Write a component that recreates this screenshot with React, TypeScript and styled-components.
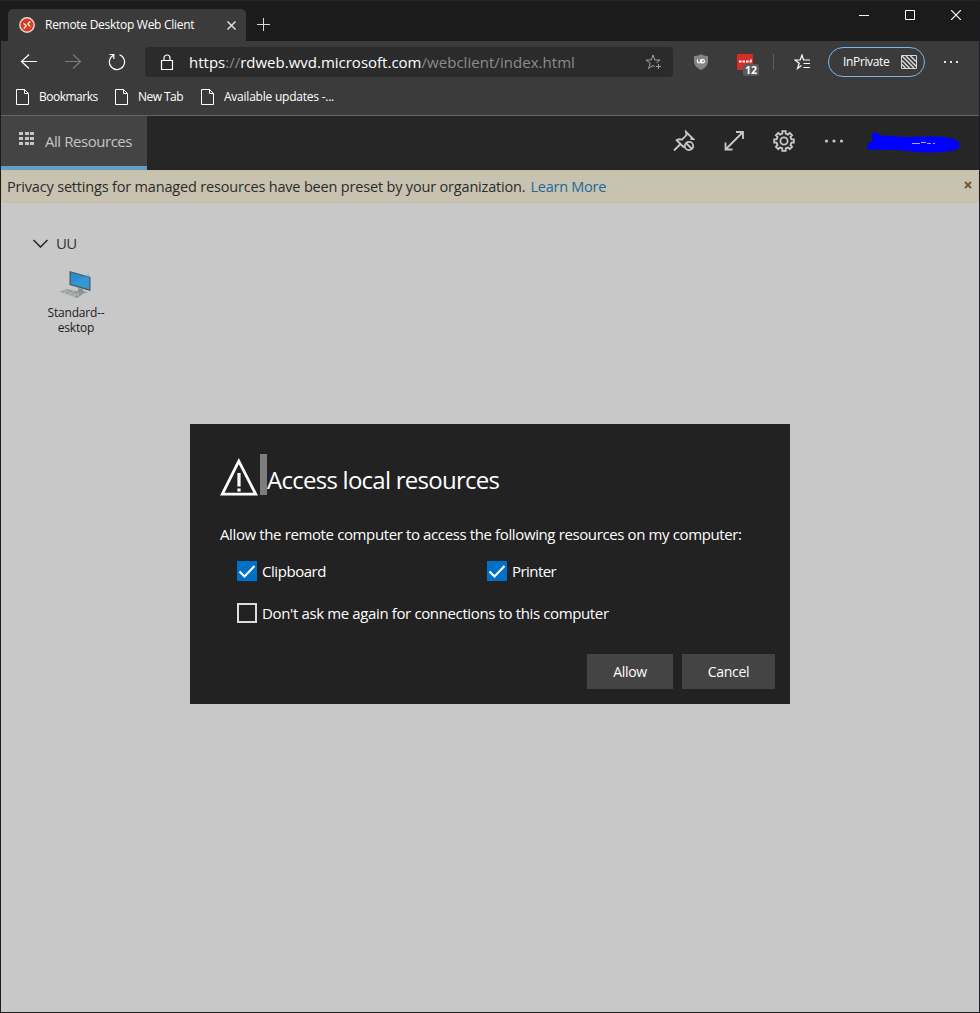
import React from "react";
import styled, { createGlobalStyle } from "styled-components";

const Global = createGlobalStyle`
  * { box-sizing: border-box; }
  body { margin: 0; background: #1b1b1b; font-family: "Open Sans", "Noto Sans", sans-serif; }
  svg { display: block; flex: none; }
`;

const Text = styled.span<{ $size: number; $track?: number; $color?: string }>`
  font-size: ${(p) => p.$size}px;
  letter-spacing: ${(p) => p.$track ?? 0}px;
  color: ${(p) => p.$color ?? "#fff"};
  white-space: nowrap;
  line-height: 20px;
`;

const Window = styled.div`
  width: 980px;
  height: 1013px;
  display: flex;
  flex-direction: column;
  border: 1px solid #1c1b1d;
  border-top-color: #262626;
  background: #c8c8c8;
  overflow: hidden;
`;

const TitleBar = styled.header`
  height: 40px;
  flex: none;
  display: flex;
  align-items: flex-end;
  background: #1b1b1b;
  padding-left: 7px;
`;

const Tab = styled.div`
  width: 238px;
  height: 32px;
  display: flex;
  align-items: center;
  padding: 0 10px 0 11px;
  background: #3b3b3b;
  border-radius: 5px 5px 0 0;
`;

const TabTitle = styled.div`
  flex: 1;
  display: flex;
  margin-left: 10px;
`;

const NewTab = styled.div`
  padding: 0 0 10px 11px;
`;

const WindowButtons = styled.div`
  display: flex;
  gap: 36px;
  margin-left: auto;
  padding: 0 18px 21px 0;
`;

const Toolbar = styled.div`
  height: 42px;
  flex: none;
  display: flex;
  align-items: center;
  background: #3b3b3b;
`;

const NavButtons = styled.div`
  width: 144px;
  display: flex;
  align-items: center;
  gap: 26px;
  padding-left: 19px;
`;

const AddressBar = styled.div`
  width: 528px;
  height: 30px;
  display: flex;
  align-items: center;
  padding: 0 10px 0 15px;
  background: #2b2b2b;
  border-radius: 4px;
`;

const Url = styled.div`
  flex: 1;
  display: flex;
  margin-left: 15px;
`;

const Extensions = styled.div`
  flex: 1;
  display: flex;
  align-items: center;
  padding-left: 20px;
`;

const BlockerIcon = styled.div`
  position: relative;
  margin-left: 28px;
`;

const Badge = styled.span`
  position: absolute;
  left: 6px;
  top: 10px;
  width: 16px;
  height: 12px;
  border-radius: 2px;
  background: #5a5a5a;
  color: #fff;
  font-size: 10.5px;
  font-weight: 700;
  line-height: 12px;
  text-align: center;
`;

const Divider = styled.div`
  width: 1px;
  height: 16px;
  margin: 0 20px 0 20px;
  background: #5c5c5c;
`;

const PrivatePill = styled.div`
  width: 97px;
  height: 30px;
  display: flex;
  align-items: center;
  justify-content: space-between;
  margin-left: 16px;
  padding: 0 7px 0 14px;
  border: 1px solid #77b5ea;
  border-radius: 15px;
`;

const MenuDots = styled.div`
  margin-left: 19px;
`;

const Bookmarks = styled.nav`
  height: 33px;
  flex: none;
  display: flex;
  align-items: center;
  padding: 0 0 4px 15px;
  background: #3b3b3b;
  border-bottom: 1px solid #666;
`;

const Bookmark = styled.div<{ $width: number }>`
  width: ${(p) => p.$width}px;
  display: flex;
  align-items: center;
  gap: 9px;
`;

const AppHeader = styled.div`
  height: 54px;
  flex: none;
  display: flex;
  align-items: center;
  background: #262626;
`;

const ResourcesTab = styled.div`
  width: 146px;
  height: 54px;
  display: flex;
  align-items: center;
  gap: 11px;
  padding-left: 18px;
  background: #444;
  border-bottom: 4px solid #5e9fcb;
`;

const GridIcon = styled.div`
  display: grid;
  grid-template-columns: repeat(3, 4px);
  grid-auto-rows: 3px;
  gap: 2px 1.5px;
  margin-bottom: 5px;
`;

const GridCell = styled.i`
  background: #c6c6c6;
`;

const HeaderActions = styled.div`
  display: flex;
  align-items: center;
  gap: 28px;
  margin-left: auto;
  padding: 0 17px 4px 0;
`;

const UserScribble = styled.div`
  margin: 4px 0 0 -7px;
`;

const Notice = styled.div`
  height: 33px;
  flex: none;
  display: flex;
  align-items: center;
  gap: 5px;
  padding: 0 6px 0 5px;
  background: #c8c3b0;
  border: 1px solid #c8bc9d;
  border-radius: 4px;
`;

const NoticeClose = styled.div`
  margin: -4px 0 0 auto;
`;

const Workspace = styled.main`
  position: relative;
  flex: 1;
  padding: 30px 0 0 30px;
`;

const GroupTitle = styled.div`
  display: flex;
  align-items: center;
  gap: 8px;
  height: 20px;
  padding-left: 2px;
`;

const Resource = styled.div`
  width: 90px;
  display: flex;
  flex-direction: column;
  align-items: center;
  margin-top: 17px;
`;

const ResourceName = styled.div`
  margin-top: 5px;
  text-align: center;
  color: #1c1c1c;
  font-size: 12px;
  line-height: 15px;
  letter-spacing: -0.2px;
`;

const Dialog = styled.section`
  position: absolute;
  left: 189px;
  top: 221px;
  width: 600px;
  height: 280px;
  padding: 30px 15px 15px 30px;
  display: flex;
  flex-direction: column;
  background: #222;
`;

const DialogHeading = styled.div`
  display: flex;
  height: 41px;
`;

const WarningIcon = styled.div`
  padding: 2px 2px 0 0;
`;

const HeadingBar = styled.div`
  width: 7px;
  height: 41px;
  background: #7d7d7d;
`;

const HeadingText = styled.div`
  display: flex;
  padding-top: 16px;
`;

const DialogMessage = styled.div`
  display: flex;
  margin-top: 29px;
`;

const Options = styled.div`
  display: grid;
  grid-template-columns: 250px 1fr;
  row-gap: 22px;
  margin: 17px 0 0 17px;
`;

const Option = styled.label<{ $wide?: boolean }>`
  display: flex;
  align-items: center;
  gap: 5px;
  height: 20px;
  grid-column: ${(p) => (p.$wide ? "1 / -1" : "auto")};
`;

const CheckBox = styled.span<{ $checked?: boolean }>`
  width: 20px;
  height: 20px;
  flex: none;
  background: ${(p) => (p.$checked ? "#0071c8" : "transparent")};
  border: ${(p) => (p.$checked ? "none" : "2px solid #dcdcdc")};
`;

const DialogActions = styled.div`
  display: flex;
  justify-content: flex-end;
  gap: 9px;
  margin-top: auto;
`;

const DialogButton = styled.button<{ $width: number }>`
  width: ${(p) => p.$width}px;
  height: 35px;
  padding: 0;
  border: 0;
  background: #444;
  font-family: inherit;
`;

const Page = () => (
  <svg width="14" height="16" viewBox="0 0 14 16" fill="none" stroke="#fff">
    <path d="M.5.5h8l4 4v11H.5zM8.5.5v4h4" />
  </svg>
);

const Check = () => (
  <svg width="20" height="20" fill="none" stroke="#fff" strokeWidth="2">
    <path d="M2.5 10.5 7.5 15.5 17.5 5" />
  </svg>
);

const bookmarks = [
  { label: "Bookmarks", width: 99, track: -0.5 },
  { label: "New Tab", width: 86, track: -0.55 },
  { label: "Available updates -...", width: 130, track: -0.23 },
];

const gearTeeth = [0, 45, 90, 135, 180, 225, 270, 315];

export default function App() {
  return (
    <>
      <Global />
      <Window>
        <TitleBar>
          <Tab>
            <svg width="16" height="16" viewBox="0 0 16 16">
              <circle cx="8" cy="8" r="7.2" fill="#d83b20" stroke="#e9d7d2" strokeWidth="1.4" />
              <path d="M4.600 6.300 7.200 8.900 4.800 11.700M11.300 4.300 8.800 7l2.600 2.700" fill="none" stroke="#fff" strokeWidth="1.2" />
            </svg>
            <TabTitle><Text $size={12} $track={-0.28}>Remote Desktop Web Client</Text></TabTitle>
            <svg width="10" height="10" stroke="#e8e8e8" strokeWidth="1.4">
              <path d="m1.500 1.500 8 8m0-8-8 8" />
            </svg>
          </Tab>
          <NewTab>
            <svg width="14" height="14" stroke="#d8d8d8"><path d="M0 7.5h13M6.5 1v13" /></svg>
          </NewTab>
          <WindowButtons>
            <svg width="10" height="10" stroke="#fff"><path d="M0 5.5h10" /></svg>
            <svg width="10" height="10" fill="none" stroke="#fff"><path d="M.5.5h9v9h-9z" /></svg>
            <svg width="10" height="10" stroke="#fff" strokeWidth="1.2"><path d="m0 0 10 10M10 0 0 10" /></svg>
          </WindowButtons>
        </TitleBar>

        <Toolbar>
          <NavButtons>
            <svg width="18" height="18" fill="none" stroke="#fff" strokeWidth="1.2">
              <path d="M17 8.500H1.500M9 1.500l-7.500 7 7.500 7" />
            </svg>
            <svg width="18" height="18" fill="none" stroke="#7b7b7b" strokeWidth="1.2">
              <path d="M1 8.500h15.500M9 1.500l7.500 7-7.500 7" />
            </svg>
            <svg width="18" height="18" fill="none" stroke="#fff" strokeWidth="1.2">
              <path d="M11.500 1.800A7.600 7.600 0 1 1 5.500 2.200M1.500 1.500h4.300v4.500" />
            </svg>
          </NavButtons>
          <AddressBar>
            <svg width="14" height="17" fill="none" stroke="#fff" strokeWidth="1.2">
              <path d="M1.500 6.500h11v9h-11zM4 6.500V4a3 3 0 0 1 6 0v2.500" />
            </svg>
            <Url>
              <Text $size={15}>https</Text>
              <Text $size={15} $color="#8c8c8c">://</Text>
              <Text $size={15}>rdweb.wvd.microsoft.com</Text>
              <Text $size={15} $track={0.04} $color="#8c8c8c">/webclient/index.html</Text>
            </Url>
            <svg width="18" height="16" fill="none" stroke="#a0a0a0">
              <path d="M9.800 12.700 8 11.500 3.500 14.500l1.700-5.200L1 6h5.200L8 1l1.800 5H15l-3.500 2.700M13.500 10v5M11 12.500h5" />
            </svg>
          </AddressBar>
          <Extensions>
            <svg width="16" height="16" viewBox="0 0 16 16">
              <path d="M8 0c2 1.500 4 2 7 2v5c0 4-2.500 7-7 9-4.500-2-7-5-7-9V2c3 0 5-.5 7-2z" fill="#858585" />
              <path d="M4.500 5.500v2.200c0 1.600 3 1.600 3 0V5.500M8.700 5.500h1c2.300 0 2.300 3.400 0 3.400h-1z" fill="none" stroke="#fff" strokeWidth="1.200" />
            </svg>
            <BlockerIcon>
              <svg width="16" height="16">
                <rect width="16" height="16" rx="1" fill="#d32d27" />
                <path d="M2 7.500h2.500M5.500 7.500H8M9 7.500h2.500M12.500 7.500h2" stroke="#fff" strokeWidth="2" fill="none" />
                <path d="M14 5v3" stroke="#fff" />
              </svg>
              <Badge>12</Badge>
            </BlockerIcon>
            <Divider />
            <svg width="18" height="16" fill="none" stroke="#fff" strokeWidth="1.200">
              <path d="M7.500 11.500 3.500 14.500l1.700-5.200L1 6h5.200L8 1l1.500 5H16M9.500 9.500H16M9.500 13.500H16" />
            </svg>
            <PrivatePill>
              <Text $size={12} $track={-0.35}>InPrivate</Text>
              <svg width="16" height="14" fill="none" stroke="#d8d8d8">
                <path d="M.5.5h15v13H.5z" />
                <path d="m1 1 12 12M5 1l10.500 10.500M9.500 1 15 6.500M1 5.500 8.500 13M1 9.500 4.500 13" strokeWidth="1.500" />
              </svg>
            </PrivatePill>
            <MenuDots>
              <svg width="14" height="2" fill="#e4e4e4"><path d="M0 0h2v2H0zM6 0h2v2H6zM12 0h2v2h-2z" /></svg>
            </MenuDots>
          </Extensions>
        </Toolbar>

        <Bookmarks>
          {bookmarks.map((b) => (
            <Bookmark key={b.label} $width={b.width}>
              <Page />
              <Text $size={12} $track={b.track}>{b.label}</Text>
            </Bookmark>
          ))}
        </Bookmarks>

        <AppHeader>
          <ResourcesTab>
            <GridIcon>{Array.from({ length: 9 }, (_, i) => <GridCell key={i} />)}</GridIcon>
            <Text $size={15} $track={-0.45} $color="#c4c4c4">All Resources</Text>
          </ResourcesTab>
          <HeaderActions>
            <svg width="22" height="22" viewBox="0 0 22 22" fill="none" stroke="#c8c8c8" strokeWidth="1.800">
              <path d="m1 20.500 6.500-6.500M3 9.500l8 8M4 10c2-1 3.500-1 5-.3L13.500 5 13 1.800 20.200 9 17.500 9" />
              <circle cx="16" cy="16" r="4.200" />
              <path d="m13 13 6 6" />
            </svg>
            <svg width="22" height="22" viewBox="0 0 22 22" fill="none" stroke="#c8c8c8" strokeWidth="1.800">
              <path d="M2.500 19.500 20 2M13 2h7v7M2.500 12.500v7h7" />
            </svg>
            <svg width="22" height="22" viewBox="0 0 22 22" fill="none" stroke="#c8c8c8" strokeWidth="1.800">
              {gearTeeth.map((a) => (
                <path
                  key={a}
                  transform={`rotate(${a} 11 11)`}
                  d="M8.200 4 9.300 3.600V1.200h3.400v2.400L13.800 4"
                  strokeLinecap="round"
                />
              ))}
              <circle cx="11" cy="11" r="3.600" />
            </svg>
            <svg width="22" height="4" fill="#cacaca">
              <circle cx="3.500" cy="2" r="1.600" /><circle cx="11" cy="2" r="1.600" /><circle cx="18.500" cy="2" r="1.600" />
            </svg>
            <UserScribble>
              <svg width="96" height="22" viewBox="0 0 96 22">
                <path d="M6 2.500c1-3 5-2 7 0 4 2 9 1 18 2 12 1 22 0 34 0 12 0 25 1 28 6 2 6-2 8-12 9-14 2-30 1-45-1-6-1-12 0-24-1-5 1-11 1-11-3 0-3 3-4 6-5-1-2-2-4-1-7z" fill="#00f" />
                <path d="M46 11.500h8M55 10.500h5M61 11.500h4M67 11.500h2" stroke="#a8a8ff" />
              </svg>
            </UserScribble>
          </HeaderActions>
        </AppHeader>

        <Notice>
          <Text $size={14.5} $track={-0.18} $color="#2b2b2b">Privacy settings for managed resources have been preset by your organization.</Text>
          <Text $size={14.5} $track={-0.25} $color="#20689b">Learn More</Text>
          <NoticeClose>
            <svg width="8" height="8" stroke="#6b542b" strokeWidth="1.800"><path d="m1 1 6 6m0-6-6 6" /></svg>
          </NoticeClose>
        </Notice>

        <Workspace>
          <GroupTitle>
            <svg width="15" height="10" fill="none" stroke="#222" strokeWidth="1.500"><path d="m.5 2 7 7 7-7" /></svg>
            <Text $size={15} $track={-0.8} $color="#333">UU</Text>
          </GroupTitle>
          <Resource>
            <svg width="32" height="30" viewBox="0 0 32 30">
              <path d="m9.500 1 21 6v14l-21-6z" fill="#50575c" />
              <path d="m10.800 2.500 18.500 5.300v11.400l-18.500-5.300z" fill="#278fcf" />
              <path d="m10.800 13.900 18.500-11v16.300z" fill="#49a5da" opacity=".35" />
              <path d="m18 18 5 1.300v2l5 1-6 1.500-7-1.800 3-1z" fill="#8b8f91" />
              <path d="m7 19 17 4.500-7 4.500L0 22z" fill="#92979a" />
              <path d="m4 21 15 4.500M2 22.500l13 4M9 19.500l-6 4M14 21l-6 4M19 22.500l-6 4" stroke="#bdc0c1" strokeWidth=".8" />
            </svg>
            <ResourceName>Standard--<br />esktop</ResourceName>
          </Resource>

          <Dialog>
            <DialogHeading>
              <WarningIcon>
                <svg width="38" height="40" viewBox="0 0 38 40" fill="none" stroke="#fff">
                  <path d="M18.800 5.200 2.300 38.200h33.400z" strokeWidth="2.800" />
                  <path d="M19 17v13.500M19 32.500v3" strokeWidth="3.200" />
                </svg>
              </WarningIcon>
              <HeadingBar />
              <HeadingText><Text $size={24} $track={-0.74}>Access local resources</Text></HeadingText>
            </DialogHeading>
            <DialogMessage>
              <Text $size={15} $track={-0.38}>Allow the remote computer to access the following resources on my computer:</Text>
            </DialogMessage>
            <Options>
              <Option><CheckBox $checked><Check /></CheckBox><Text $size={15} $track={-0.45}>Clipboard</Text></Option>
              <Option><CheckBox $checked><Check /></CheckBox><Text $size={15} $track={-0.55}>Printer</Text></Option>
              <Option $wide><CheckBox /><Text $size={15} $track={-0.37}>Don't ask me again for connections to this computer</Text></Option>
            </Options>
            <DialogActions>
              <DialogButton $width={86}><Text $size={14} $track={-0.3}>Allow</Text></DialogButton>
              <DialogButton $width={93}><Text $size={14} $track={-0.3}>Cancel</Text></DialogButton>
            </DialogActions>
          </Dialog>
        </Workspace>
      </Window>
    </>
  );
}
